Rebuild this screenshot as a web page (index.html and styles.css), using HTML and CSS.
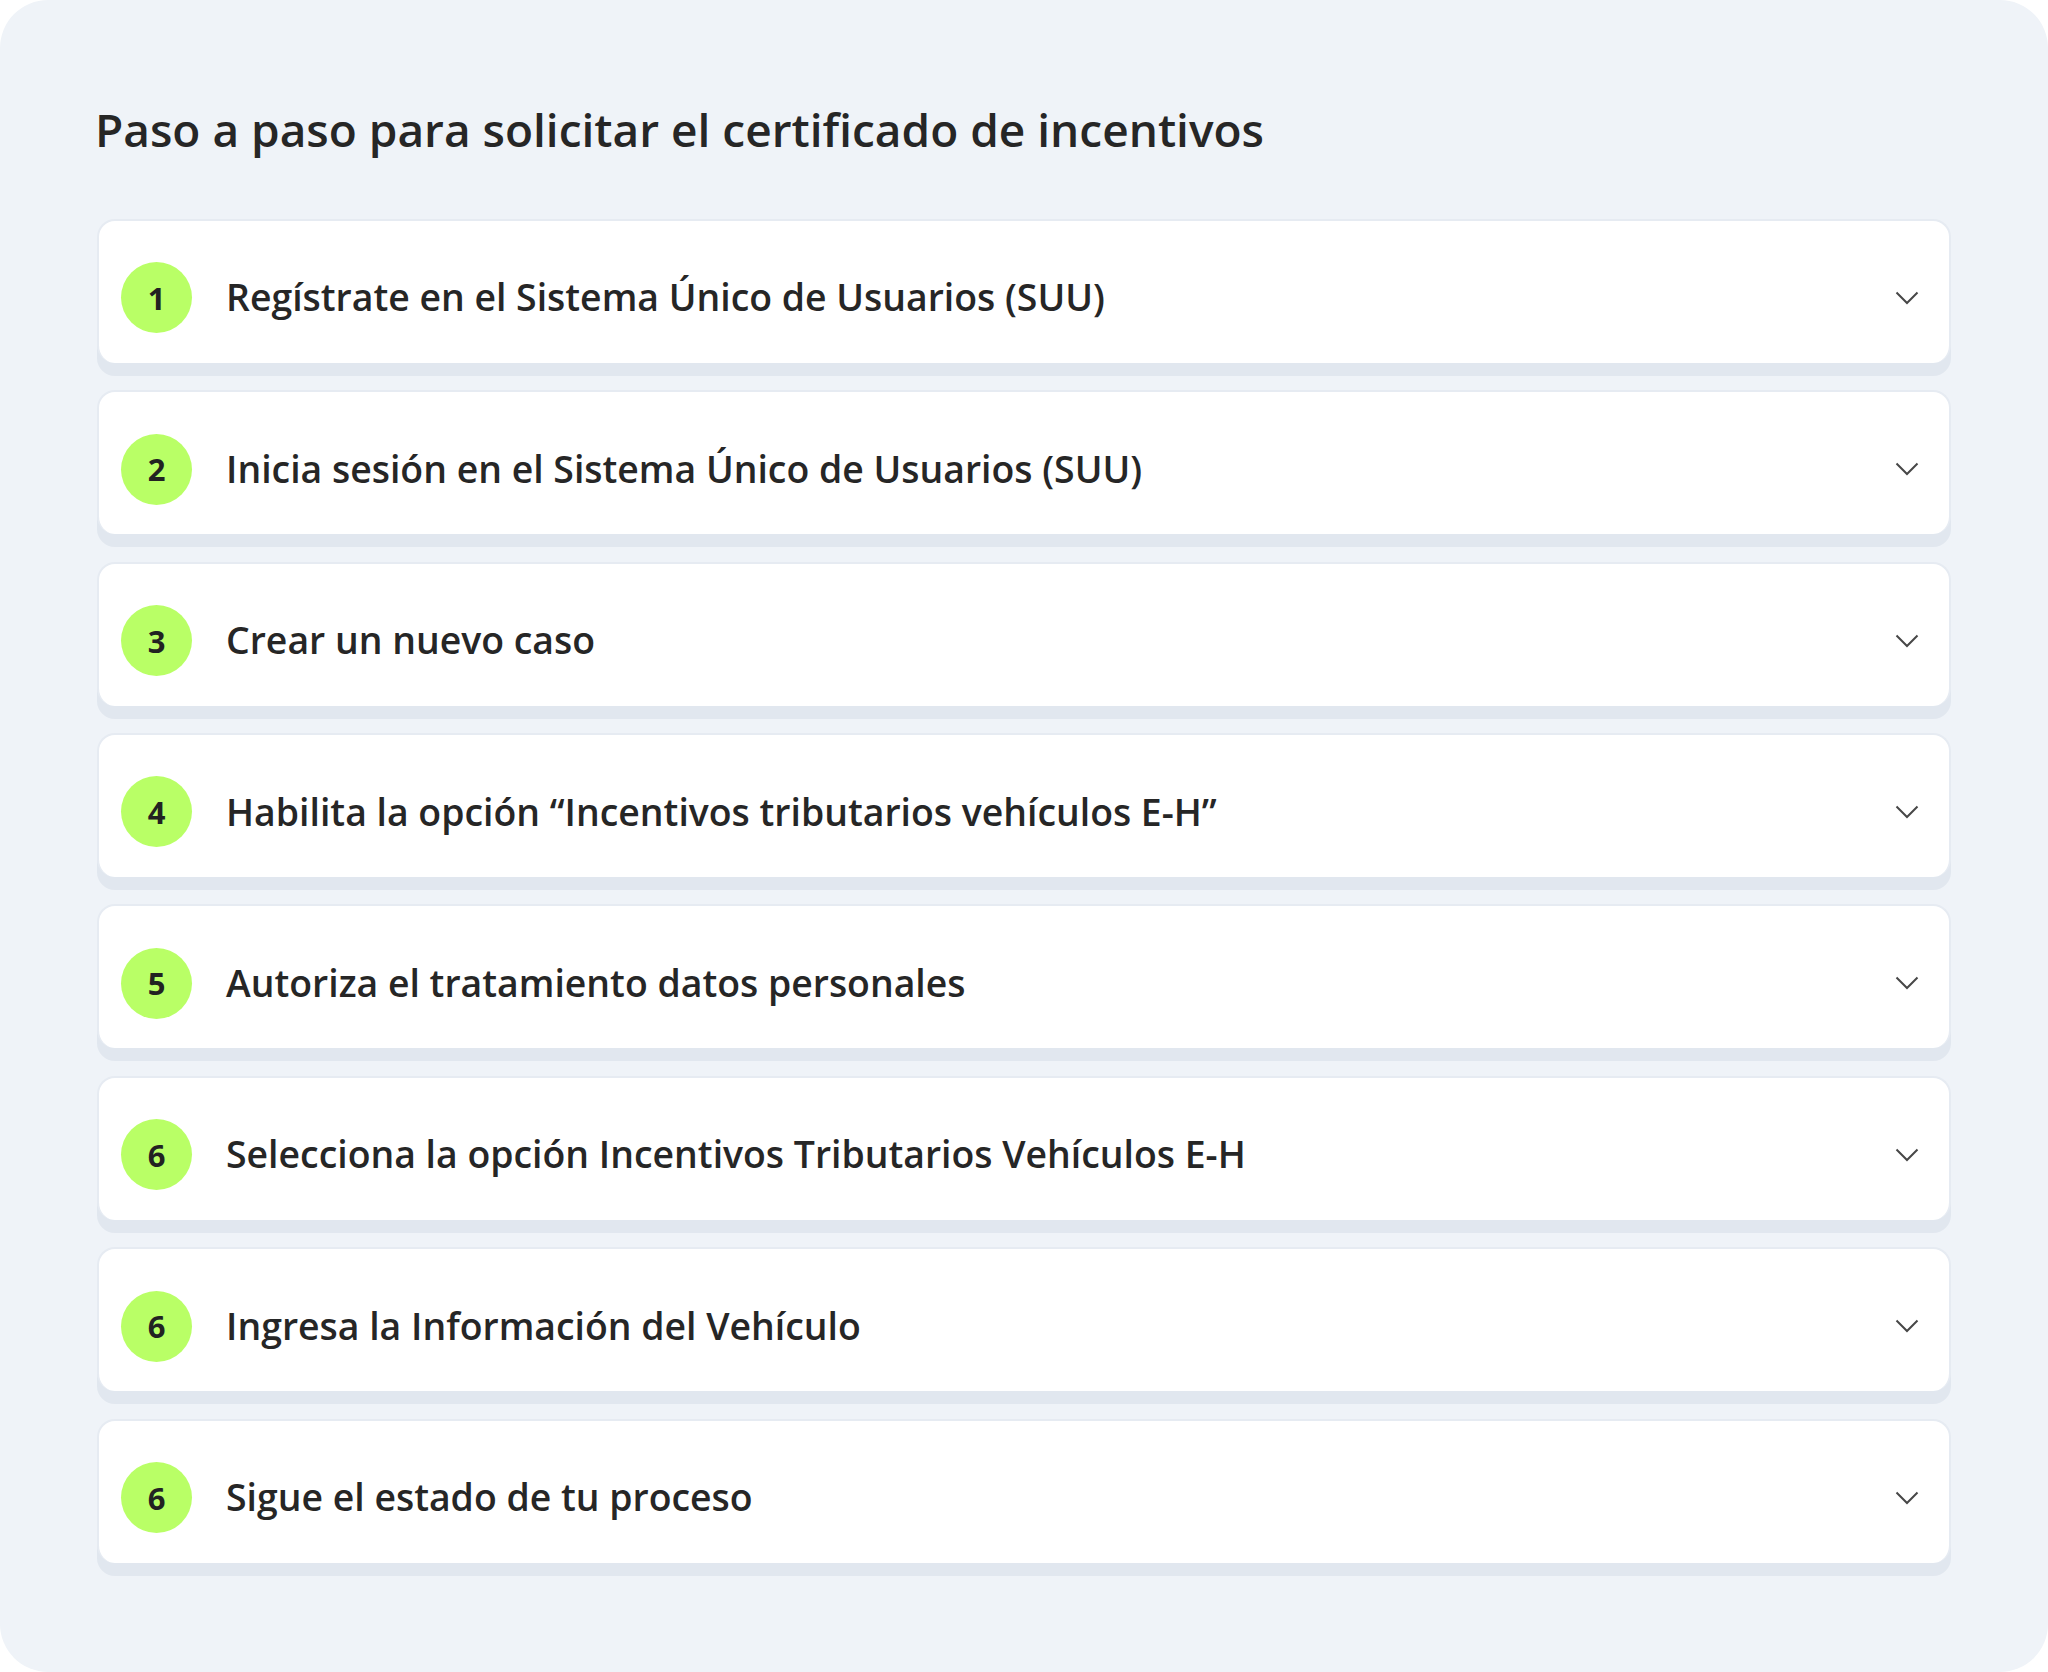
FILE: index.html
```html
<!DOCTYPE html>
<html lang="es">
<head>
    <meta charset="UTF-8">
    <meta name="viewport" content="width=device-width, initial-scale=1.0">
    <title>Paso a paso</title>
    <link rel="stylesheet" href="styles.css">
</head>
<body>
    <div class="panel">
        <h2 class="title">Paso a paso para solicitar el certificado de incentivos</h2>

        <div class="steps">
            <div class="step">
                <span class="num">1</span>
                <span class="label">Regístrate en el Sistema Único de Usuarios (SUU)</span>
                <svg class="chevron" viewBox="0 0 24 14"><polyline points="1.5,1.5 12,12 22.5,1.5"/></svg>
            </div>
            <div class="step">
                <span class="num">2</span>
                <span class="label">Inicia sesión en el Sistema Único de Usuarios (SUU)</span>
                <svg class="chevron" viewBox="0 0 24 14"><polyline points="1.5,1.5 12,12 22.5,1.5"/></svg>
            </div>
            <div class="step">
                <span class="num">3</span>
                <span class="label">Crear un nuevo caso</span>
                <svg class="chevron" viewBox="0 0 24 14"><polyline points="1.5,1.5 12,12 22.5,1.5"/></svg>
            </div>
            <div class="step">
                <span class="num">4</span>
                <span class="label">Habilita la opción “Incentivos tributarios vehículos E-H”</span>
                <svg class="chevron" viewBox="0 0 24 14"><polyline points="1.5,1.5 12,12 22.5,1.5"/></svg>
            </div>
            <div class="step">
                <span class="num">5</span>
                <span class="label">Autoriza el tratamiento datos personales</span>
                <svg class="chevron" viewBox="0 0 24 14"><polyline points="1.5,1.5 12,12 22.5,1.5"/></svg>
            </div>
            <div class="step">
                <span class="num">6</span>
                <span class="label">Selecciona la opción Incentivos Tributarios Vehículos E-H</span>
                <svg class="chevron" viewBox="0 0 24 14"><polyline points="1.5,1.5 12,12 22.5,1.5"/></svg>
            </div>
            <div class="step">
                <span class="num">6</span>
                <span class="label">Ingresa la Información del Vehículo</span>
                <svg class="chevron" viewBox="0 0 24 14"><polyline points="1.5,1.5 12,12 22.5,1.5"/></svg>
            </div>
            <div class="step">
                <span class="num">6</span>
                <span class="label">Sigue el estado de tu proceso</span>
                <svg class="chevron" viewBox="0 0 24 14"><polyline points="1.5,1.5 12,12 22.5,1.5"/></svg>
            </div>
        </div>
    </div>
</body>
</html>
```

FILE: styles.css
```css
body {
    margin: 0;
    background-color: #ffffff;
    font-family: "Open Sans", Lato, sans-serif;
    color: #262626;
}
.panel {
    box-sizing: border-box;
    width: 2048px;
    height: 1672px;
    padding: 100px 97px 0 97px;
    background-color: #eff3f8;
    border-radius: 48px;
}
.title {
    margin: 0 0 59px -2px;
    font-size: 46px;
    line-height: 1.3;
    font-weight: 600;
}
.steps {
    display: flex;
    flex-direction: column;
    gap: 27.4px;
}
.step {
    box-sizing: border-box;
    display: flex;
    align-items: center;
    height: 144px;
    padding: 12px 30px 0 22px;
    background-color: #ffffff;
    border: 2px solid #e6ebf2;
    border-bottom: none;
    border-radius: 18px;
    box-shadow: 0 13px 0 #e1e7ef;
}
.num {
    display: flex;
    align-items: center;
    justify-content: center;
    flex: none;
    width: 71px;
    height: 71px;
    margin-right: 34px;
    border-radius: 50%;
    background-color: #b9ff66;
    font-size: 31px;
    font-weight: 700;
    color: #222222;
}
.label {
    flex: 1;
    font-size: 37.4px;
    font-weight: 600;
    line-height: 1.3;
}
.chevron {
    width: 24px;
    height: 14px;
    fill: none;
    stroke: #474747;
    stroke-width: 2;
}
```
